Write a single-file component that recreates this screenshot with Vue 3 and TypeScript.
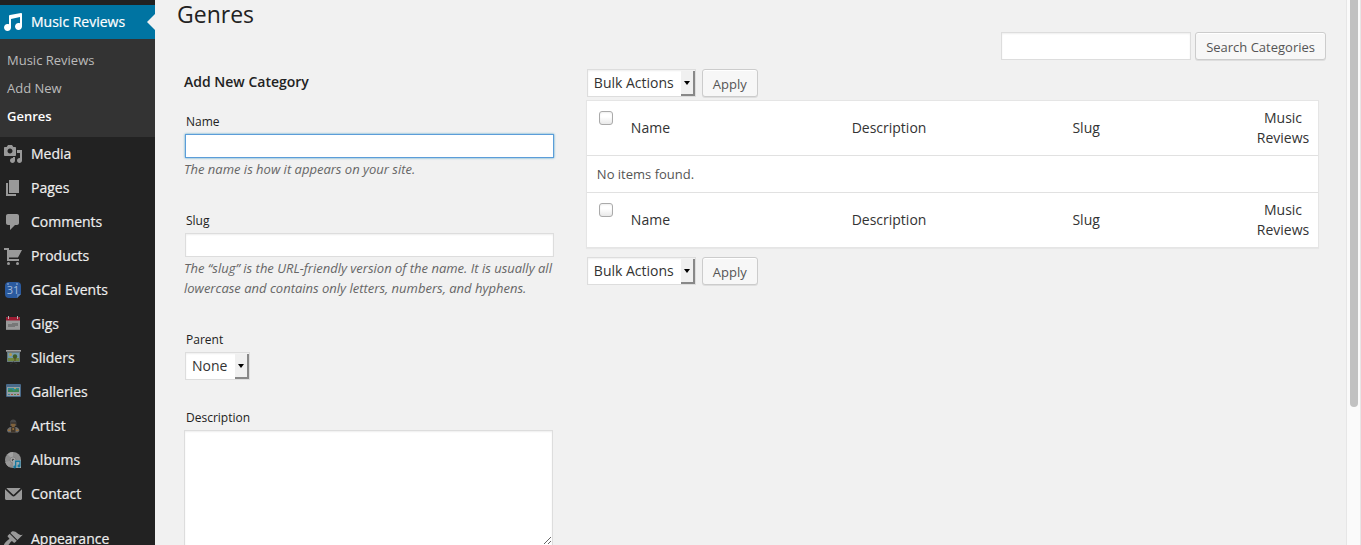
<script setup lang="ts">
import { ref } from 'vue'

interface MenuItem {
  label: string
  icon: string
}

const glyphs: Record<string, string> = {
  audio:
    'M6.99 3.08l11.02-2c.55-.08.99.45.99 1V14.5c0 1.94-1.57 3.5-3.5 3.5S12 16.44 12 14.5c0-1.93 1.57-3.5 3.5-3.5.54 0 1.04.14 1.5.35V5.08l-9 2V16c-.24 1.7-1.74 3-3.5 3C2.57 19 1 17.44 1 15.5 1 13.57 2.57 12 4.5 12c.54 0 1.04.14 1.5.35V4.08c0-.55.44-.91.99-1z',
  media:
    'M13 11V4c0-.55-.45-1-1-1h-1.67L9 1H5L3.67 3H2c-.55 0-1 .45-1 1v7c0 .55.45 1 1 1h10c.55 0 1-.45 1-1zM7 4.5c1.38 0 2.5 1.12 2.5 2.5S8.38 9.5 7 9.5 4.5 8.38 4.5 7 5.62 4.5 7 4.5zM14 6h5v10.5c0 1.38-1.12 2.5-2.5 2.5S14 17.88 14 16.5s1.12-2.5 2.5-2.5c.17 0 .34.02.5.05V9h-3V6zm-4 8.05V13h2v3.5c0 1.38-1.12 2.5-2.5 2.5S7 17.88 7 16.5 8.12 14 9.5 14c.17 0 .34.02.5.05z',
  pages: 'M6 15V2h10v13H6zm-1 1h8v2H3V5h2v11z',
  comments:
    'M5 2h9c1.1 0 2 .9 2 2v7c0 1.1-.9 2-2 2h-2l-5 5v-5H5c-1.1 0-2-.9-2-2V4c0-1.1.9-2 2-2z',
  cart:
    'M1 2h5v2h13l-4 7.5H6V13h10v2H4V4H1zM5.5 16a1.5 1.5 0 1 1 0 3 1.5 1.5 0 0 1 0-3zM14.5 16a1.5 1.5 0 1 1 0 3 1.5 1.5 0 0 1 0-3z',
  email:
    'M3.9 4h13.2c.5 0 .6.3.3.6L11 10.6c-.3.3-.7.3-1 0L3.6 4.6c-.3-.3-.2-.6.3-.6zM2 5.2l6.9 6.6c.9.9 2.3.9 3.2 0L19 5.2V14.5c0 .8-.7 1.5-1.5 1.5h-14C2.7 16 2 15.3 2 14.5z',
  brush:
    'M14.48 11.06L7.41 3.99l1.5-1.5c.5-.56 2.3-.47 3.51.32 1.21.8 1.43 1.28 2.91 2.1 1.18.64 2.45 1.26 4.45.85zm-.71.71L6.7 4.7 4.93 6.47c-.39.39-.39 1.02 0 1.41l1.06 1.06c.39.39.39 1.03 0 1.42-.6.6-1.43 1.11-2.21 1.69-.35.26-.7.53-1.01.84C1.43 14.23.4 16.08 1.4 17.07c.99 1 2.84-.03 4.18-1.36.31-.31.58-.66.85-1.02.57-.78 1.08-1.61 1.69-2.21.39-.39 1.02-.39 1.41 0l1.06 1.06c.39.39 1.02.39 1.41 0z',
}

const submenu = ['Music Reviews', 'Add New', 'Genres']

const menu: MenuItem[] = [
  { label: 'Media', icon: 'media' },
  { label: 'Pages', icon: 'pages' },
  { label: 'Comments', icon: 'comments' },
  { label: 'Products', icon: 'cart' },
  { label: 'GCal Events', icon: 'gcal' },
  { label: 'Gigs', icon: 'gigs' },
  { label: 'Sliders', icon: 'sliders' },
  { label: 'Galleries', icon: 'galleries' },
  { label: 'Artist', icon: 'artist' },
  { label: 'Albums', icon: 'albums' },
  { label: 'Contact', icon: 'email' },
  { label: 'Appearance', icon: 'brush' },
]

const current = ref('Genres')
const search = ref('')
const name = ref('')
const slug = ref('')
const description = ref('')
</script>

<template>
  <div class="page">
    <nav class="sidebar" aria-label="Main menu">
      <a href="#" class="item active">
        <svg class="icon" viewBox="0 0 20 20" aria-hidden="true"><path :d="glyphs.audio" /></svg>
        <span>Music Reviews</span>
      </a>
      <ul class="submenu">
        <li v-for="entry in submenu" :key="entry">
          <a href="#" :class="{ current: entry === current }" @click.prevent="current = entry">{{ entry }}</a>
        </li>
      </ul>
      <ul class="menu">
        <li v-for="item in menu" :key="item.label">
          <a href="#" class="item">
            <svg class="icon" viewBox="0 0 20 20" aria-hidden="true">
              <path v-if="glyphs[item.icon]" :d="glyphs[item.icon]" />
              <g v-else-if="item.icon === 'gcal'">
                <path fill="#2a5a9f" d="M6 2h8a4 4 0 0 1 4 4v8l-4 4H6a4 4 0 0 1-4-4V6a4 4 0 0 1 4-4z" />
                <path fill="#5580b8" d="M14 18v-3a1 1 0 0 1 1-1h3z" />
                <circle cx="5" cy="4" r="0.8" fill="#a9bfdc" />
                <circle cx="14" cy="4" r="0.8" fill="#a9bfdc" />
                <text class="day" x="10" y="14" text-anchor="middle">31</text>
              </g>
              <g v-else-if="item.icon === 'gigs'">
                <rect x="3" y="3" width="14" height="13" rx="1" fill="#999" />
                <path fill="#9c1c33" d="M3 6.5V4a1 1 0 0 1 1-1h12a1 1 0 0 1 1 1v2.5z" />
                <path fill="#b5b5b5" d="M5 2h1v3H5zM14 2h1v3h-1z" />
                <path fill="#777" d="M9 9h6v1H9zM5 10h10v2H5zM5 12h7v1H5z" />
                <path fill="#858585" d="M3 15h14v1H3z" />
              </g>
              <g v-else-if="item.icon === 'sliders'">
                <path fill="#777" d="M3 2h15v2H3z" />
                <path fill="#a3a3a3" d="M3 2h15v1H3z" />
                <path fill="#66797b" d="M4 4h13v10H4z" />
                <path fill="#7399ab" d="M5 5h11v5H5z" />
                <path fill="#71883f" d="M5 10h11v3H5z" />
                <circle cx="7.5" cy="6.5" r="1.5" fill="#b39a48" />
                <circle cx="12" cy="8.5" r="2.2" fill="#3f5c28" />
                <path fill="#5c4522" d="M11.5 9h1v4h-1z" />
                <path fill="none" stroke="#333" d="M7 16l3.500-2 3.500 2" />
              </g>
              <g v-else-if="item.icon === 'galleries'">
                <rect x="3" y="2" width="15" height="13" rx="1" fill="#496a8a" />
                <path fill="#969fa2" d="M4 5h13v9H4z" />
                <path fill="#2f8b95" d="M5 6h11v4H5z" />
                <path fill="#3c8650" d="M5 10V8.5l3-1.500 3 2 3-2 2 1v2z" />
                <path fill="#b0a055" d="M11 6h2v1h-2z" />
                <path fill="#397fa0" d="M5 12h2v1H5z" />
                <path fill="#9c4c40" d="M8 12h2v1H8zM14 12h2v1h-2z" />
                <path fill="#4c854a" d="M11 12h2v1h-2z" />
              </g>
              <g v-else-if="item.icon === 'artist'">
                <path fill="#484848" d="M7 7a3.200 3.500 0 0 1 6.400 0v3H7z" />
                <path fill="#80623c" d="M8 6.500h4.500V9l-1.200 2.500H9.200L8 9z" />
                <path fill="#303030" d="M7.500 6.300h5.500v1.400h-5.500z" />
                <path fill="#6c6c6c" d="M4 15c0-2.500 2-3.800 4-4l2.200 1.500 2.200-1.500c2.200.2 4 1.500 4 4l-1.500 1.500h-9.500z" />
                <path fill="#42372a" d="M8 11.500h4.500v5H8z" />
                <path fill="#98713a" d="M5 13.500h2.500V15H5zM13 13.500h2.500V15H13zM9.500 12h1.400v2H9.500z" />
              </g>
              <g v-else>
                <circle cx="10" cy="10" r="8" fill="#8d8d8d" />
                <path fill="#a2a2a2" d="M10 10L4.500 4.200A8 8 0 0 1 10 2z" />
                <path fill="#999" d="M10 10l-4 6.900A8 8 0 0 1 2.200 12z" />
                <circle cx="10" cy="10" r="3" fill="#a3a3a3" stroke="#777" stroke-width="0.6" />
                <circle cx="10" cy="10" r="1.2" fill="#4c4c4c" />
                <path fill="#9aa8ad" d="M10 10h8v8h-8z" />
                <path fill="#16799f" d="M12 10.500h5.500V16a1.500 1.500 0 1 1-1.200-1.500V12h-3v5a1.500 1.500 0 1 1-1.300-1.500z" />
              </g>
            </svg>
            <span>{{ item.label }}</span>
          </a>
        </li>
      </ul>
    </nav>

    <main class="content">
      <h1>Genres</h1>
      <form class="search" role="search" @submit.prevent>
        <input v-model="search" type="search" aria-label="Search Categories" />
        <button type="submit" class="button">Search Categories</button>
      </form>

      <div class="columns">
        <form class="add-form" @submit.prevent>
          <h2>Add New Category</h2>
          <div class="field">
            <label for="tag-name">Name</label>
            <input id="tag-name" v-model="name" class="focused" type="text" />
            <p>The name is how it appears on your site.</p>
          </div>
          <div class="field">
            <label for="tag-slug">Slug</label>
            <input id="tag-slug" v-model="slug" type="text" />
            <p>
              The “slug” is the URL-friendly version of the name. It is usually all lowercase and
              contains only letters, numbers, and hyphens.
            </p>
          </div>
          <div class="field">
            <label for="parent">Parent</label>
            <span class="select">
              <select id="parent"><option>None</option></select>
            </span>
          </div>
          <div class="field">
            <label for="tag-description">Description</label>
            <textarea id="tag-description" v-model="description" rows="5"></textarea>
          </div>
        </form>

        <section class="list">
          <div class="bulk">
            <span class="select">
              <select aria-label="Bulk action"><option>Bulk Actions</option></select>
            </span>
            <button type="button" class="button">Apply</button>
          </div>
          <table>
            <thead>
              <tr>
                <th class="check"><input type="checkbox" aria-label="Select all" /></th>
                <th class="wide">Name</th>
                <th class="wide">Description</th>
                <th>Slug</th>
                <th class="posts">Music Reviews</th>
              </tr>
            </thead>
            <tbody>
              <tr>
                <td colspan="5">No items found.</td>
              </tr>
            </tbody>
            <tfoot>
              <tr>
                <th class="check"><input type="checkbox" aria-label="Select all" /></th>
                <th>Name</th>
                <th>Description</th>
                <th>Slug</th>
                <th class="posts">Music Reviews</th>
              </tr>
            </tfoot>
          </table>
          <div class="bulk">
            <span class="select">
              <select aria-label="Bulk action, bottom"><option>Bulk Actions</option></select>
            </span>
            <button type="button" class="button">Apply</button>
          </div>
        </section>
      </div>
    </main>

    <div class="scrollbar" aria-hidden="true"><div class="thumb"></div></div>
  </div>
</template>

<style>
body {
  margin: 0;
  background: #f1f1f1;
}
</style>

<style scoped>
.page {
  display: flex;
  height: 100vh;
  overflow: hidden;
  background: #f1f1f1;
  color: #222;
  font: 13px/20px 'Open Sans', 'Noto Sans', sans-serif;
}

.page *,
.page *::before,
.page *::after {
  box-sizing: border-box;
}

ul {
  margin: 0;
  padding: 0;
  list-style: none;
}

.sidebar {
  flex: 0 0 155px;
  padding-top: 5px;
  background: #222;
}

.item {
  position: relative;
  display: flex;
  align-items: center;
  gap: 8px;
  height: 34px;
  padding-left: 3px;
  color: #eee;
  font-size: 14px;
  text-decoration: none;
  -webkit-text-stroke: 0.2px currentColor;
}

.icon {
  width: 20px;
  height: 20px;
  fill: #999;
  -webkit-text-stroke: 0;
}

.day {
  fill: #a5bbda;
  font-size: 11px;
}

.menu li:last-child {
  margin-top: 11px;
}

.active {
  background: #0074a2;
  color: #fff;
}

.active .icon {
  fill: #fff;
}

.active::after {
  content: '';
  position: absolute;
  right: 0;
  top: 9px;
  border: 8px solid transparent;
  border-left-width: 0;
  border-right-color: #f1f1f1;
}

.submenu {
  padding: 7px;
  background: #333;
}

.submenu a {
  display: block;
  color: #bbb;
  line-height: 28px;
  text-decoration: none;
}

.submenu .current {
  color: #fff;
  font-weight: 600;
}

.content {
  flex: 1;
  min-width: 0;
  padding: 0 20px;
}

h1 {
  margin: 0 2px 3px;
  font-size: 23px;
  font-weight: 400;
  line-height: 29px;
}

input,
textarea,
select,
button {
  margin: 0;
  font-family: inherit;
}

input,
textarea,
select {
  border: 1px solid #ddd;
  border-radius: 0;
  background: #fff;
  color: #333;
  box-shadow: inset 0 1px 2px rgba(0, 0, 0, 0.07);
  outline: 0;
}

.search {
  display: flex;
  justify-content: flex-end;
  gap: 4px;
}

.search input {
  appearance: none;
  width: 190px;
  height: 28px;
}

.button {
  height: 28px;
  padding: 2px 10px 0;
  border: 1px solid #ccc;
  border-radius: 3px;
  background: #f7f7f7;
  box-shadow: inset 0 1px 0 #fff, 0 1px 0 rgba(0, 0, 0, 0.08);
  color: #555;
  font-size: 13px;
}

.columns {
  display: grid;
  grid-template-columns: 35fr 65fr;
  padding-top: 9px;
}

.add-form {
  padding: 3px 24px 0 9px;
}

h2 {
  margin: 0 0 20px;
  font-size: 14px;
  font-weight: 600;
  line-height: 20px;
}

.field {
  display: flex;
  flex-direction: column;
  align-items: stretch;
  margin-bottom: 28px;
}

.field label {
  margin-bottom: 2px;
  padding-left: 2px;
  font-size: 12px;
}

.field input {
  height: 24px;
  margin-left: 1px;
}

.field textarea {
  height: 116px;
  margin-right: 1px;
}

.field .select {
  align-self: flex-start;
  margin-left: 1px;
}

.field .focused {
  border-color: #5b9dd9;
  box-shadow: 0 0 2px rgba(30, 140, 190, 0.8);
}

.field p {
  margin: 1px 0 0;
  padding-bottom: 4px;
  color: #666;
  font-style: italic;
}

.select {
  position: relative;
  display: inline-flex;
}

.select select {
  appearance: none;
  height: 28px;
  padding: 0 21px 2px 6px;
  font-size: 14px;
}

.select::before {
  content: '';
  position: absolute;
  top: 2px;
  right: 1px;
  bottom: 1px;
  width: 14px;
  border: solid #888;
  border-width: 0 2px 2px 0;
  background: #f0f0f0;
  pointer-events: none;
}

.select::after {
  content: '';
  position: absolute;
  top: 12px;
  right: 6px;
  border: 3px solid transparent;
  border-top: 4px solid #000;
  border-bottom-width: 0;
  pointer-events: none;
}

.list {
  padding: 0 7px 0 8px;
}

.bulk {
  display: flex;
  gap: 6px;
  padding-left: 1px;
}

table {
  width: 100%;
  margin: 3px 0 9px;
  border: 1px solid #e5e5e5;
  border-spacing: 0;
  background: #fff;
  box-shadow: 0 1px 1px rgba(0, 0, 0, 0.04);
  table-layout: fixed;
}

th {
  padding: 7px 10px;
  color: #333;
  font-size: 14px;
  font-weight: 400;
  text-align: left;
}

td {
  padding: 8px 10px;
  border: solid #e1e1e1;
  border-width: 1px 0;
  color: #555;
}

.check {
  width: 34px;
  padding: 10px 0 0 12px;
  vertical-align: top;
}

.check input {
  appearance: none;
  display: block;
  width: 14px;
  height: 14px;
  border-color: #aaa;
  border-radius: 3px;
  background: linear-gradient(#fff 40%, #e9e9e9);
}

.wide {
  width: 30.2%;
}

.posts {
  width: 70px;
  padding: 7px 5px;
  text-align: center;
}

.scrollbar {
  flex: 0 0 15px;
  padding-left: 3px;
  border: solid #e6e6e6;
  border-width: 0 1px;
  background: #fafafa;
}

.thumb {
  width: 8px;
  height: 407px;
  border-radius: 0 0 4px 4px;
  background: #c1c1c1;
}
</style>
